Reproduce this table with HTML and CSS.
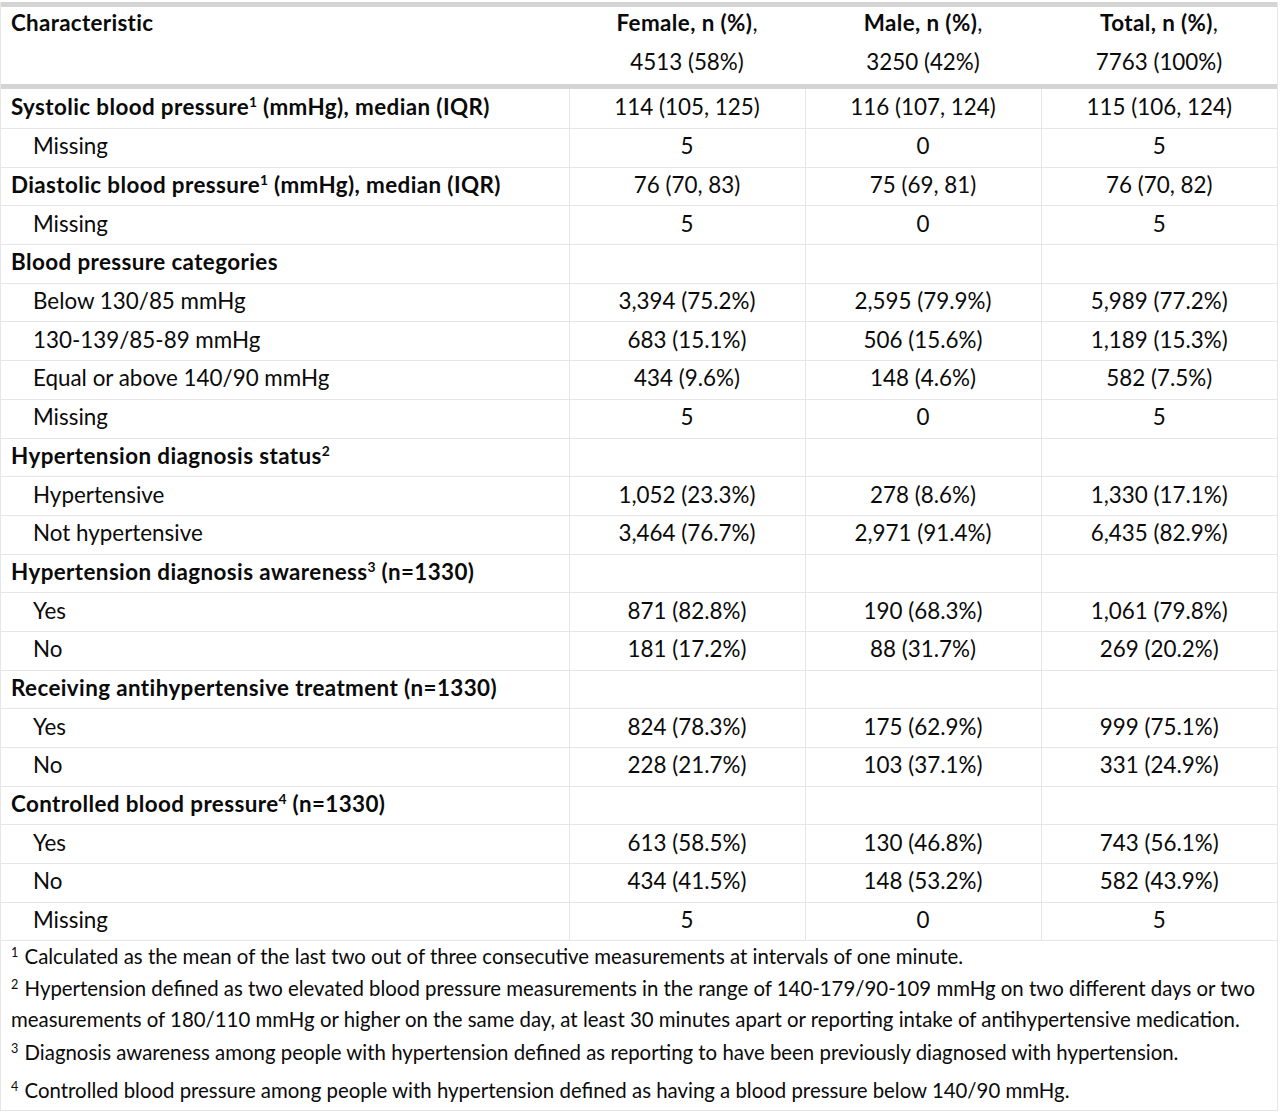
FILE: index.html
```html
<!DOCTYPE html>
<html lang="en">
<head>
<meta charset="utf-8">
<title>Blood pressure characteristics</title>
<link rel="stylesheet" href="styles.css">
</head>
<body>
<div class="wrap">
<table class="bp">
  <colgroup>
    <col class="c-char"><col class="c-num"><col class="c-num"><col class="c-num">
  </colgroup>
  <thead>
    <tr>
      <th class="lbl"><div class="hd">Characteristic</div></th>
      <th><div class="hd"><b>Female, n (%)</b>,<br>4513 (58%)</div></th>
      <th><div class="hd"><b>Male, n (%)</b>,<br>3250 (42%)</div></th>
      <th><div class="hd"><b>Total, n (%)</b>,<br>7763 (100%)</div></th>
    </tr>
  </thead>
  <tbody>
    <tr class="grp"><td>Systolic blood pressure<sup>1</sup> (mmHg), median (IQR)</td><td>114 (105, 125)</td><td>116 (107, 124)</td><td>115 (106, 124)</td></tr>
    <tr><td class="sub">Missing</td><td>5</td><td>0</td><td>5</td></tr>
    <tr class="grp"><td>Diastolic blood pressure<sup>1</sup> (mmHg), median (IQR)</td><td>76 (70, 83)</td><td>75 (69, 81)</td><td>76 (70, 82)</td></tr>
    <tr><td class="sub">Missing</td><td>5</td><td>0</td><td>5</td></tr>
    <tr class="grp"><td>Blood pressure categories</td><td></td><td></td><td></td></tr>
    <tr><td class="sub">Below 130/85 mmHg</td><td>3,394 (75.2%)</td><td>2,595 (79.9%)</td><td>5,989 (77.2%)</td></tr>
    <tr><td class="sub">130-139/85-89 mmHg</td><td>683 (15.1%)</td><td>506 (15.6%)</td><td>1,189 (15.3%)</td></tr>
    <tr><td class="sub">Equal or above 140/90 mmHg</td><td>434 (9.6%)</td><td>148 (4.6%)</td><td>582 (7.5%)</td></tr>
    <tr><td class="sub">Missing</td><td>5</td><td>0</td><td>5</td></tr>
    <tr class="grp"><td>Hypertension diagnosis status<sup>2</sup></td><td></td><td></td><td></td></tr>
    <tr><td class="sub">Hypertensive</td><td>1,052 (23.3%)</td><td>278 (8.6%)</td><td>1,330 (17.1%)</td></tr>
    <tr><td class="sub">Not hypertensive</td><td>3,464 (76.7%)</td><td>2,971 (91.4%)</td><td>6,435 (82.9%)</td></tr>
    <tr class="grp"><td>Hypertension diagnosis awareness<sup>3</sup> (n=1330)</td><td></td><td></td><td></td></tr>
    <tr><td class="sub">Yes</td><td>871 (82.8%)</td><td>190 (68.3%)</td><td>1,061 (79.8%)</td></tr>
    <tr><td class="sub">No</td><td>181 (17.2%)</td><td>88 (31.7%)</td><td>269 (20.2%)</td></tr>
    <tr class="grp"><td>Receiving antihypertensive treatment (n=1330)</td><td></td><td></td><td></td></tr>
    <tr><td class="sub">Yes</td><td>824 (78.3%)</td><td>175 (62.9%)</td><td>999 (75.1%)</td></tr>
    <tr><td class="sub">No</td><td>228 (21.7%)</td><td>103 (37.1%)</td><td>331 (24.9%)</td></tr>
    <tr class="grp"><td>Controlled blood pressure<sup>4</sup> (n=1330)</td><td></td><td></td><td></td></tr>
    <tr><td class="sub">Yes</td><td>613 (58.5%)</td><td>130 (46.8%)</td><td>743 (56.1%)</td></tr>
    <tr><td class="sub">No</td><td>434 (41.5%)</td><td>148 (53.2%)</td><td>582 (43.9%)</td></tr>
    <tr><td class="sub">Missing</td><td>5</td><td>0</td><td>5</td></tr>
  </tbody>
</table>
<div class="notes">
  <p class="n1"><sup>1</sup> Calculated as the mean of the last two out of three consecutive measurements at intervals of one minute.</p>
  <p class="n2"><sup>2</sup> Hypertension defined as two elevated blood pressure measurements in the range of 140-179/90-109 mmHg on two different days or two measurements of 180/110 mmHg or higher on the same day, at least 30 minutes apart or reporting intake of antihypertensive medication.</p>
  <p class="n3"><sup>3</sup> Diagnosis awareness among people with hypertension defined as reporting to have been previously diagnosed with hypertension.</p>
  <p class="n4"><sup>4</sup> Controlled blood pressure among people with hypertension defined as having a blood pressure below 140/90 mmHg.</p>
</div>
</div>
</body>
</html>
```

FILE: styles.css
```css
html, body {
  margin: 0;
  padding: 0;
  background: #fff;
}
body {
  font-family: Lato, "Liberation Sans", sans-serif;
  font-size: 20px;
  color: #0a0a0a;
}
.wrap {
  width: 1278px;
  margin-top: 2px;
  border-left: 1px solid #e6e6e6;
  border-right: 1px solid #e6e6e6;
  border-bottom: 1px solid #e6e6e6;
  box-sizing: border-box;
}
.bp {
  width: 100%;
  border-collapse: collapse;
  table-layout: fixed;
  font-size: 22.4px;
}
.c-char { width: 568px; }
.c-num { width: 236px; }
.bp thead tr {
  border-top: 5px solid #d4d4d4;
  border-bottom: 5px solid #d4d4d4;
}
.bp th {
  font-weight: normal;
  text-align: center;
  vertical-align: top;
  height: 77px;
  padding: 0 10px;
}
.hd {
  line-height: 39px;
  margin-top: -4px;
}
.bp th b {
  font-weight: bold;
  letter-spacing: 0.4px;
}
.bp th.lbl {
  text-align: left;
  font-weight: bold;
  letter-spacing: 0.3px;
}
.bp td {
  height: 34.7px;
  padding: 0 10px 3px;
  text-align: center;
  vertical-align: middle;
  border-bottom: 1px solid #e6e6e6;
  border-left: 1px solid #e6e6e6;
  line-height: 26px;
  white-space: nowrap;
}
.bp td:first-child {
  text-align: left;
  border-left: none;
}
.bp tr.grp td:first-child {
  font-weight: bold;
  letter-spacing: 0.4px;
}
.bp td.sub { padding-left: 32px; }
.bp tbody tr:first-child td { height: 36px; }
sup {
  font-size: 0.62em;
  line-height: 0;
  vertical-align: 0.55em;
  letter-spacing: 0;
}
.notes {
  padding: 0 0 0 10px;
  font-size: 20.4px;
}
.notes p {
  margin: 0;
  line-height: 31px;
}
.notes sup { margin-right: 1px; }
.notes .n2 { margin-top: 1px; }
.notes .n3 { margin-top: 2px; }
.notes .n4 { margin-top: 7px; padding-bottom: 4px; }
```
